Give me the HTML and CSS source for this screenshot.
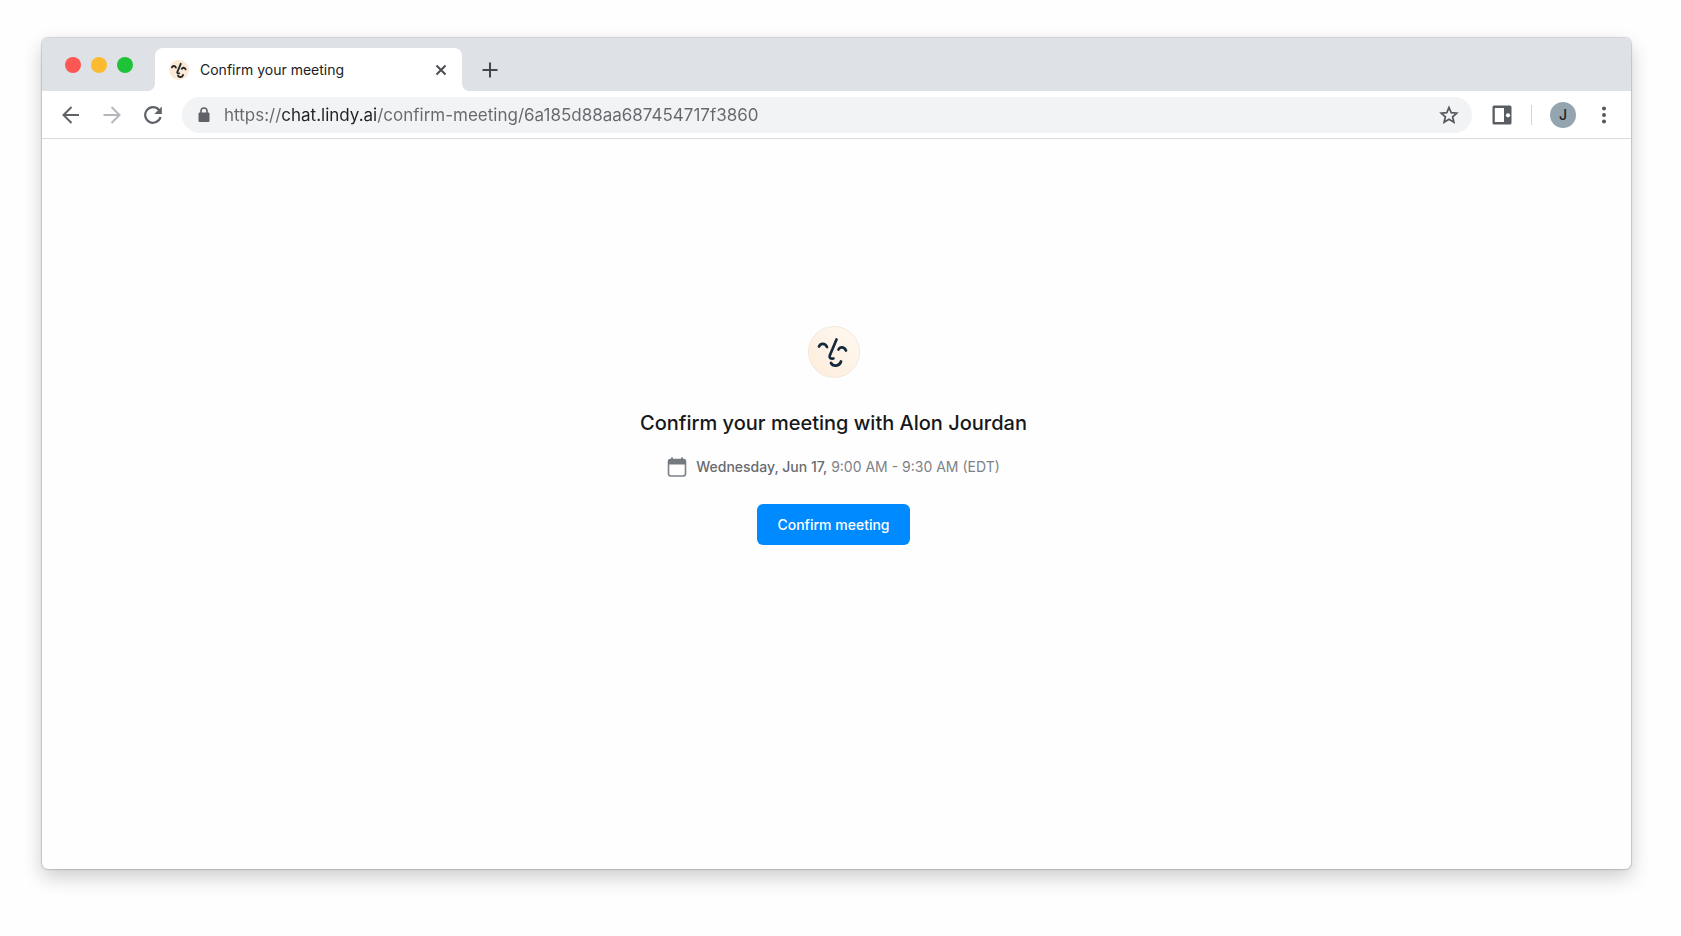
FILE: index.html
```html
<!DOCTYPE html>
<html lang="en">
<head>
    <meta charset="UTF-8">
    <meta name="viewport" content="width=device-width, initial-scale=1.0">
    <title>Confirm your meeting</title>
    <link rel="stylesheet" href="styles.css">
</head>
<body>
    <!-- Shared face artwork, used by the tab icon and the page logo -->
    <svg class="sprite" aria-hidden="true">
        <defs>
            <linearGradient id="cream" x1="1" y1="0" x2="0" y2="1">
                <stop offset="0" stop-color="#fffaf3"/>
                <stop offset="1" stop-color="#fdebd9"/>
            </linearGradient>
            <g id="features" fill="none" stroke-linecap="round" stroke-linejoin="round">
                <path d="M11 20.5C12.5 17 17 16.8 19 21"/>
                <path d="M30.5 23.5C32 20.3 36.5 20.5 38 24.5"/>
                <path d="M28.5 13.5L21.8 29.5Q20.5 33 25.5 32.5"/>
                <path d="M23 37C25 40.8 31.5 40.5 33 35.5"/>
            </g>
        </defs>
        <symbol id="face" viewBox="0 0 52 52">
            <circle cx="26" cy="26" r="25.5" fill="url(#cream)" stroke="#f3e8dc"/>
            <use href="#features" stroke="#14293d" stroke-width="2.7"/>
        </symbol>
        <symbol id="face-small" viewBox="0 0 52 52">
            <circle cx="26" cy="26" r="26" fill="#fbe9d5"/>
            <use href="#features" stroke="#23282b" stroke-width="3.6" transform="translate(-7 -8) scale(1.32)"/>
        </symbol>
    </svg>

    <div class="window">
        <!-- Tab strip -->
        <div class="tabs">
            <div class="lights">
                <button class="light red" aria-label="Close window"></button>
                <button class="light yellow" aria-label="Minimize window"></button>
                <button class="light green" aria-label="Zoom window"></button>
            </div>
            <div class="tab">
                <svg class="favicon"><use href="#face-small"/></svg>
                <span class="tab-title">Confirm your meeting</span>
                <button class="icon-btn" aria-label="Close tab">
                    <svg width="12" height="12" viewBox="0 0 12 12"><path d="M1.5 1.5L10.5 10.5M10.5 1.5L1.5 10.5" stroke="#4a4d51" stroke-width="2"/></svg>
                </button>
            </div>
            <button class="icon-btn new-tab" aria-label="New tab">
                <svg width="16" height="16" viewBox="0 0 16 16"><path d="M8 0.5V15.5M0.5 8H15.5" stroke="#43474c" stroke-width="2"/></svg>
            </button>
        </div>

        <!-- Toolbar -->
        <div class="toolbar">
            <div class="nav">
                <button class="icon-btn" aria-label="Back">
                    <svg width="18" height="18" viewBox="0 0 18 18"><path d="M17 9H2M9.5 1L1.5 9L9.5 17" fill="none" stroke="#5f6368" stroke-width="2"/></svg>
                </button>
                <button class="icon-btn" aria-label="Forward">
                    <svg width="18" height="18" viewBox="0 0 18 18"><path d="M0.5 9H16M8.5 1L16.5 9L8.5 17" fill="none" stroke="#b5b7ba" stroke-width="2"/></svg>
                </button>
                <button class="icon-btn" aria-label="Reload">
                    <svg width="18" height="18" viewBox="0 0 18 18"><path d="M15 4A7.8 7.8 0 1 0 16.5 11" fill="none" stroke="#5f6368" stroke-width="2.2"/><path d="M17.8 0.5V8H10.3Z" fill="#5f6368"/></svg>
                </button>
            </div>
            <div class="address">
                <svg width="12" height="16" viewBox="0 0 12 16"><rect x="0.5" y="5.500" width="11" height="9.5" rx="1.2" fill="#5f6368"/><path d="M3 6V4A3 3 0 0 1 9 4V6" fill="none" stroke="#5f6368" stroke-width="1.6"/></svg>
                <input class="url" type="text" aria-label="Address" value="https://chat.lindy.ai/confirm-meeting/6a185d88aa687454717f3860">
                <button class="icon-btn" aria-label="Bookmark this page">
                    <svg width="20" height="20" viewBox="0 0 20 20"><path d="M10 2.5L12.2 7.6L17.8 8.1L13.600 11.8L14.9 17.2L10 14.3L5.1 17.2L6.4 11.800L2.2 8.1L7.8 7.6Z" fill="none" stroke="#55595e" stroke-width="1.7"/></svg>
                </button>
            </div>
            <button class="icon-btn" aria-label="Side panel">
                <svg width="20" height="20" viewBox="0 0 20 20"><path fill-rule="evenodd" d="M2 0.5H18Q19.5 0.5 19.5 2V18Q19.5 19.500 18 19.5H2Q0.5 19.5 0.5 18V2Q0.5 0.5 2 0.5ZM2.8 3V17H12V3Z" fill="#595c61"/><circle cx="16" cy="10.3" r="2.1" fill="#fff"/></svg>
            </button>
            <span class="divider"></span>
            <button class="avatar" aria-label="Profile">J</button>
            <button class="icon-btn" aria-label="Menu">
                <svg width="6" height="18" viewBox="0 0 6 18" fill="#55595e"><circle cx="3" cy="2.5" r="2"/><circle cx="3" cy="9" r="2"/><circle cx="3" cy="15.5" r="2"/></svg>
            </button>
        </div>

        <!-- Page -->
        <main class="page">
            <svg class="logo"><use href="#face"/></svg>
            <h1>Confirm your meeting with Alon Jourdan</h1>
            <p class="when">
                <svg width="20" height="20" viewBox="0 0 20 20"><rect x="1.5" y="2.5" width="17" height="16.5" rx="2.2" fill="none" stroke="#7b8087" stroke-width="1.6"/><path d="M1 7.5V4Q1 2 3 2H17Q19 2 19 4V7.5ZM4 0.5H6V3H4ZM14 0.5H16V3H14Z" fill="#747980"/></svg>
                <span><span class="day">Wednesday, Jun 17,</span> 9:00 AM - 9:30 AM (EDT)</span>
            </p>
            <button class="confirm">Confirm meeting</button>
        </main>
    </div>
</body>
</html>
```
FILE: styles.css
```css
:root {
    --strip: #dee1e6;
    --field: #f1f3f4;
    --grey: #65686c;
    --ink: #202124;
    --blue: #008aff;
}

* {
    margin: 0;
    padding: 0;
    box-sizing: border-box;
    font-family: Inter, 'Liberation Sans', sans-serif;
}

body {
    display: flex;
    min-height: 100vh;
    padding: 38px 50px 67px 42px;
    background: #fefefe;
}

button {
    border: none;
    background: none;
    cursor: pointer;
}

.sprite {
    position: absolute;
    width: 0;
    height: 0;
}

.window {
    flex: 1;
    display: flex;
    flex-direction: column;
    overflow: hidden;
    border-radius: 6px;
    background: #fefefe;
    box-shadow: 0 0 1px 1px rgba(0, 0, 0, 0.16), 0 8px 20px rgba(0, 0, 0, 0.2);
}

/* Tab strip */
.tabs {
    display: flex;
    align-items: flex-end;
    height: 53px;
    padding-left: 23px;
    background: var(--strip);
}

.lights {
    display: flex;
    gap: 10px;
    margin-right: 22px;
    padding-bottom: 18px;
}

.light {
    width: 16px;
    height: 16px;
    border-radius: 50%;
}

.red {
    background: #fc5753;
}

.yellow {
    background: #fbbb30;
}

.green {
    background: #1ec337;
}

.tab {
    position: relative;
    display: flex;
    align-items: center;
    width: 307px;
    height: 43px;
    padding: 0 15px 0 14px;
    border-radius: 8px 8px 0 0;
    background: #fff;
}

/* Flared feet of the active tab */
.tab::before,
.tab::after {
    content: '';
    position: absolute;
    bottom: 0;
    width: 8px;
    height: 8px;
}

.tab::before {
    right: 100%;
    background: radial-gradient(circle at 0 0, transparent 8px, #fff 8px);
}

.tab::after {
    left: 100%;
    background: radial-gradient(circle at 100% 0, transparent 8px, #fff 8px);
}

.favicon {
    width: 20px;
    height: 20px;
    margin-right: 11px;
}

.tab-title {
    flex: 1;
    font-size: 14px;
    color: var(--ink);
}

.icon-btn {
    display: flex;
    align-items: center;
    justify-content: center;
}

.new-tab {
    height: 43px;
    margin-left: 20px;
}

/* Toolbar */
.toolbar {
    display: flex;
    align-items: center;
    height: 48px;
    padding: 0 24px 0 20px;
    border-bottom: 1px solid #d9dce0;
    background: #fff;
}

.nav {
    display: flex;
    gap: 23px;
    margin-right: 20px;
}

.address {
    flex: 1;
    display: flex;
    align-items: center;
    height: 36px;
    margin-right: 20px;
    padding: 0 13px 0 16px;
    border-radius: 18px;
    background: var(--field);
}

/* The host part of the address is darker than the rest */
.url {
    flex: 1;
    height: 24px;
    margin-left: 14px;
    border: none;
    outline: none;
    font-size: 17px;
    background: linear-gradient(to right, var(--grey) 57px, var(--ink) 57px, var(--ink) 152px, var(--grey) 152px);
    -webkit-background-clip: text;
    background-clip: text;
    color: transparent;
}

.divider {
    width: 1px;
    height: 20px;
    margin: 0 18px 0 19px;
    background: #d3d5d8;
}

.avatar {
    width: 26px;
    height: 26px;
    margin-right: 25px;
    border-radius: 50%;
    background: #94a5b0;
    font-size: 14px;
    font-weight: 500;
    color: var(--ink);
}

/* Page */
.page {
    flex: 1;
    display: flex;
    flex-direction: column;
    align-items: center;
    padding: 187px 6px 0 0;
}

.logo {
    width: 52px;
    height: 52px;
}

h1 {
    margin-top: 32px;
    font-size: 20px;
    font-weight: 500;
    line-height: 26px;
    color: #16181b;
}

.when {
    display: flex;
    align-items: center;
    gap: 9px;
    margin-top: 20px;
    font-size: 14px;
    line-height: 22px;
    color: #7d8187;
}

.day {
    font-weight: 500;
    color: #676b70;
}

.confirm {
    height: 41px;
    margin-top: 26px;
    padding: 0 20px;
    border-radius: 6px;
    background: var(--blue);
    font-size: 14px;
    font-weight: 500;
    color: #fff;
}
```
